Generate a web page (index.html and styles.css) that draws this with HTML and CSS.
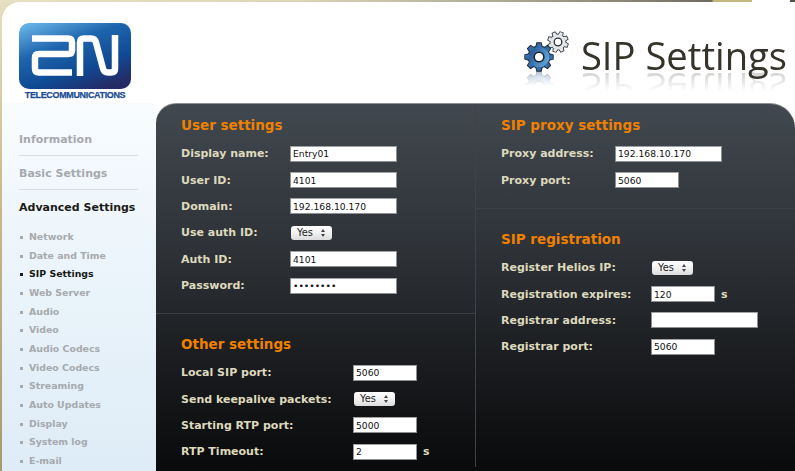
FILE: index.html
```html
<!DOCTYPE html>
<html lang="en">
<head>
<meta charset="utf-8">
<title>SIP Settings</title>
<link rel="stylesheet" href="styles.css">
</head>
<body>
<div class="page">
  <div class="topstrip"></div>
  <div class="card">
    <header class="header">
      <div class="logo">
        <svg class="logo-mark" width="112" height="66" viewBox="0 0 112 66">
          <defs>
            <linearGradient id="lg" x1="0.15" y1="0" x2="0.75" y2="1">
              <stop offset="0" stop-color="#63aee3"/>
              <stop offset="0.35" stop-color="#1d65ad"/>
              <stop offset="0.7" stop-color="#0f4a94"/>
              <stop offset="1" stop-color="#252a66"/>
            </linearGradient>
          </defs>
          <rect width="112" height="66" rx="10" fill="url(#lg)"/>
          <path d="M13 15.5H49Q53 15.5 53 19.5V27.500Q53 31 49 31H20Q16 31 16 35V45.500Q16 49.500 20 49.500H53M61 53V19.500Q61 15.500 65 15.500H72Q76 15.500 77 19.500L84 45.500Q85 49.500 89 49.500H92Q96 49.500 96 45.500V12" fill="none" stroke="#fff" stroke-width="6.500" stroke-linejoin="round"/>
        </svg>
        <div class="logo-text">TELECOMMUNICATIONS</div>
      </div>
      <div class="title">
        <svg class="gears" width="46" height="42" viewBox="0 0 46 42">
          <defs>
            <linearGradient id="gb" gradientUnits="userSpaceOnUse" x1="-12" y1="-6" x2="12" y2="6">
              <stop offset="0" stop-color="#1f4f8f"/>
              <stop offset="1" stop-color="#6cb0e2"/>
            </linearGradient>
            <path id="tb" d="M-2.800 -10L-1.900 -13.800H1.900L2.800 -10Z"/>
            <path id="ts" d="M-2 -7L-1.400 -10H1.400L2 -7Z"/>
            <g id="big">
              <circle r="10.500"/>
              <use href="#tb"/>
              <use href="#tb" transform="rotate(45)"/>
              <use href="#tb" transform="rotate(90)"/>
              <use href="#tb" transform="rotate(135)"/>
              <use href="#tb" transform="rotate(180)"/>
              <use href="#tb" transform="rotate(225)"/>
              <use href="#tb" transform="rotate(270)"/>
              <use href="#tb" transform="rotate(315)"/>
            </g>
            <g id="small">
              <circle r="7.500"/>
              <use href="#ts" transform="rotate(20)"/>
              <use href="#ts" transform="rotate(65)"/>
              <use href="#ts" transform="rotate(110)"/>
              <use href="#ts" transform="rotate(155)"/>
              <use href="#ts" transform="rotate(200)"/>
              <use href="#ts" transform="rotate(245)"/>
              <use href="#ts" transform="rotate(290)"/>
              <use href="#ts" transform="rotate(335)"/>
            </g>
          </defs>
          <g transform="translate(34 11)">
            <use href="#small" fill="#e2e7ec" stroke="#2c3138" stroke-width="1.600"/>
            <use href="#small" fill="#e2e7ec"/>
            <circle r="3.800" fill="#fff" stroke="#2c3138" stroke-width="1.300"/>
          </g>
          <g transform="translate(15 26)">
            <use href="#big" fill="#1c2530" stroke="#1c2530" stroke-width="1.800"/>
            <use href="#big" fill="url(#gb)"/>
            <circle r="4.800" fill="#fff" stroke="#1c2530" stroke-width="1.600"/>
          </g>
        </svg>
        <h1 class="title-text">SIP Settings</h1>
      </div>
    </header>
    <main class="main">
      <nav class="sidebar">
        <a class="nav-top">Information</a>
        <a class="nav-top">Basic Settings</a>
        <a class="nav-top nav-current">Advanced Settings</a>
        <ul class="subnav">
          <li>Network</li>
          <li>Date and Time</li>
          <li class="sub-current">SIP Settings</li>
          <li>Web Server</li>
          <li>Audio</li>
          <li>Video</li>
          <li>Audio Codecs</li>
          <li>Video Codecs</li>
          <li>Streaming</li>
          <li>Auto Updates</li>
          <li>Display</li>
          <li>System log</li>
          <li>E-mail</li>
        </ul>
      </nav>
      <section class="panel">
        <div class="col col-left">
          <div class="block block-user">
            <h2>User settings</h2>
            <div class="row"><label>Display name:</label><input class="in-long" value="Entry01"></div>
            <div class="row"><label>User ID:</label><input class="in-long" value="4101"></div>
            <div class="row"><label>Domain:</label><input class="in-long" value="192.168.10.170"></div>
            <div class="row"><label>Use auth ID:</label><span class="select">Yes</span></div>
            <div class="row"><label>Auth ID:</label><input class="in-long" value="4101"></div>
            <div class="row"><label>Password:</label><input class="in-long" type="password" value="12345678"></div>
          </div>
          <div class="block block-other">
            <h2>Other settings</h2>
            <div class="row"><label>Local SIP port:</label><input class="in-short" value="5060"></div>
            <div class="row"><label>Send keepalive packets:</label><span class="select">Yes</span></div>
            <div class="row"><label>Starting RTP port:</label><input class="in-short" value="5000"></div>
            <div class="row"><label>RTP Timeout:</label><input class="in-short" value="2"><span class="unit">s</span></div>
          </div>
        </div>
        <div class="col col-right">
          <div class="block block-proxy">
            <h2>SIP proxy settings</h2>
            <div class="row"><label>Proxy address:</label><input class="in-long" value="192.168.10.170"></div>
            <div class="row"><label>Proxy port:</label><input class="in-short" value="5060"></div>
          </div>
          <div class="block block-reg">
            <h2>SIP registration</h2>
            <div class="row"><label>Register Helios IP:</label><span class="select">Yes</span></div>
            <div class="row"><label>Registration expires:</label><input class="in-short" value="120"><span class="unit">s</span></div>
            <div class="row"><label>Registrar address:</label><input class="in-long" value=""></div>
            <div class="row"><label>Registrar port:</label><input class="in-short" value="5060"></div>
          </div>
        </div>
      </section>
    </main>
  </div>
</div>
</body>
</html>
```
FILE: styles.css
```css
* { box-sizing: border-box; }
html, body { margin: 0; padding: 0; height: 100%; overflow: hidden; }
body { background: #fff; font-family: "DejaVu Sans", Verdana, sans-serif; }

.page {
  height: 471px;
  display: flex;
  flex-direction: column;
  background: linear-gradient(180deg, #e6dec0 0%, #c9bb8e 40%, #a99a6c 100%);
}
.topstrip {
  height: 2px;
  flex: none;
  background: linear-gradient(90deg, #e8e0c4 0, #dcd5ba 300px, #a8a48f 520px, #6f6c60 712px, #c4b67f 713px, #c4b67f 752px, #fff 752px, #fff 790px, #55524a 790px);
}
.card {
  flex: 1;
  min-height: 0;
  margin-left: 2px;
  background: #fff;
  border-top-left-radius: 18px;
  display: flex;
  flex-direction: column;
}

.header {
  height: 101px;
  flex: none;
  display: flex;
  justify-content: space-between;
  padding: 21px 8px 0 17px;
}
.logo { width: 112px; display: flex; flex-direction: column; }
.logo-mark { display: block; }
.logo-text {
  margin-top: 1px;
  font: bold 9px/11px "Liberation Sans", Arial, sans-serif;
  color: #1b4c93;
  text-align: center;
  white-space: nowrap;
  letter-spacing: -0.35px;
  -webkit-text-stroke: 0.25px #1b4c93;
}
.title { display: flex; align-items: flex-start; gap: 11px; padding-top: 8px; }
.gears {
  display: block;
  -webkit-box-reflect: below -3px linear-gradient(transparent 62%, rgba(255, 255, 255, .4));
}
.title-text {
  margin: 0;
  height: 42px;
  font: 400 38.2px/48px "Open Sans", sans-serif;
  color: #35332a;
  white-space: nowrap;
  -webkit-box-reflect: below -3px linear-gradient(transparent 50%, rgba(255, 255, 255, .25));
}

.main { flex: 1; min-height: 0; display: flex; }

.sidebar {
  width: 154px;
  flex: none;
  padding: 28px 0 0 17px;
  background: linear-gradient(180deg, #f8fcff 0%, #ecf5fb 40%, #deecf7 100%);
}
.nav-top {
  display: block;
  width: 119px;
  height: 25px;
  margin-bottom: 9px;
  font-weight: bold;
  font-size: 11px;
  line-height: 18px;
  color: #a6a9ad;
  white-space: nowrap;
  border-bottom: 1px solid #d9dcdf;
}
.nav-current { color: #1b1b16; border-bottom: none; height: 29px; margin-bottom: 0; }
.subnav { list-style: none; margin: 0; padding: 0; }
.subnav li {
  position: relative;
  height: 18.67px;
  padding-left: 10px;
  font-weight: bold;
  font-size: 9.4px;
  line-height: 18px;
  color: #a6a9ad;
  white-space: nowrap;
}
.subnav li::before {
  content: "";
  position: absolute;
  left: 1px;
  top: 8px;
  width: 3px;
  height: 3px;
  background: currentColor;
}
.subnav .sub-current { color: #1b1b16; }

.panel {
  flex: 1;
  min-width: 0;
  display: flex;
  border-radius: 20px 25px 0 0;
  border-top: 1px solid #8b9094;
  background: linear-gradient(180deg, #41484f 0%, #2e3237 40%, #1a1c1f 70%, #090a0b 100%);
}
.col { display: flex; flex-direction: column; }
.col-left { width: 320px; border-right: 1px solid #3e4349; margin-bottom: 4px; }
.col-right { flex: 1; }

.block { padding: 12px 0 0 25px; }
.block h2 {
  margin: 0 0 6.5px;
  font-size: 13.5px;
  line-height: 18px;
  font-weight: bold;
  color: #ef8100;
}
.block-user { height: 210px; border-bottom: 1px solid #3b4046; }
.block-other { padding-top: 21px; }
.block-proxy { height: 105px; border-bottom: 1px solid #3b4046; }
.block-reg { padding-top: 21px; }

.block-user { --label: 109px; }
.block-other { --label: 172px; }
.block-proxy { --label: 114px; }
.block-reg { --label: 150px; }

.row {
  display: flex;
  align-items: center;
  height: 26.4px;
}
.row label {
  width: var(--label);
  flex: none;
  font-size: 11px;
  font-weight: bold;
  color: #ded9bd;
  white-space: nowrap;
}
.row input {
  height: 16px;
  padding: 0 2px;
  border: 1px solid #8d8f91;
  border-top-color: #a0a2a4;
  background: #fff;
  font: 9.2px "DejaVu Sans", Verdana, sans-serif;
  color: #111;
  border-radius: 0;
  outline: none;
}
.in-long { width: 107px; }
.in-short { width: 64px; }
.select {
  position: relative;
  display: block;
  width: 41px;
  height: 14px;
  margin-left: 1px;
  padding-left: 6px;
  border-radius: 3px;
  background: linear-gradient(180deg, #fff 0%, #f1f1f1 50%, #dcdcdc 100%);
  font: 9.8px/14px "DejaVu Sans", Verdana, sans-serif;
  color: #222;
}
.select::after {
  content: "";
  position: absolute;
  right: 7px;
  top: 3px;
  width: 0;
  height: 0;
  border-left: 2px solid transparent;
  border-right: 2px solid transparent;
  border-bottom: 3px solid #444;
}
.select::before {
  content: "";
  position: absolute;
  right: 7px;
  bottom: 3px;
  width: 0;
  height: 0;
  border-left: 2px solid transparent;
  border-right: 2px solid transparent;
  border-top: 3px solid #444;
}
.unit {
  margin-left: 6px;
  font-size: 11px;
  font-weight: bold;
  color: #ded9bd;
}
```
